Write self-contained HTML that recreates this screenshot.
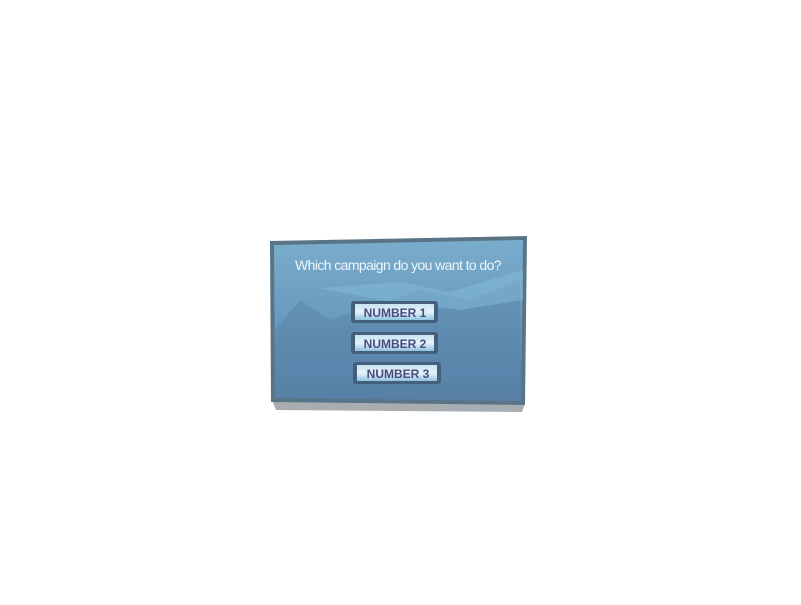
<!DOCTYPE html>
<html><head><style>body{margin:0;background:#fff;width:801px;height:600px;overflow:hidden}</style></head>
<body>
<svg width="801" height="600" viewBox="0 0 801 600" xmlns="http://www.w3.org/2000/svg">
<defs>
<linearGradient id="g" x1="0" y1="0" x2="0" y2="1">
<stop offset="0" stop-color="#7aaccc"/><stop offset="0.45" stop-color="#6a9cc0"/><stop offset="1" stop-color="#557ea6"/>
</linearGradient>
<linearGradient id="b" x1="0" y1="0" x2="0" y2="1">
<stop offset="0" stop-color="#c8e4f2"/><stop offset="0.5" stop-color="#e4f2fa"/><stop offset="1" stop-color="#8fc4e0"/>
</linearGradient>
</defs>
<polygon points="272,400 525,403 522,412 276,410" fill="#a8adb2"/>
<polygon points="270,241 527,236 525,405 271,402" fill="#5a7487"/>
<polygon points="274,245 523,240 521,401 275,398" fill="url(#g)"/>
<polygon points="275,330 300,300 330,320 420,290 470,300 520,280 521,401 275,398" fill="#5a82a8" opacity="0.5"/>
<polygon points="320,288 400,282 450,292 523,270 523,300 460,310 380,300" fill="#86bcdc" opacity="0.5"/>
<text x="398" y="270" text-anchor="middle" font-family="Liberation Sans, sans-serif" font-size="14" fill="#eef6fb" letter-spacing="-0.6">Which campaign do you want to do?</text>
<g font-family="Liberation Sans, sans-serif" font-weight="bold" font-size="12" fill="#4b4a7c" text-anchor="middle">
<rect x="351" y="301" width="87" height="22" rx="3" fill="#44607a"/><rect x="355" y="304" width="79" height="16" fill="url(#b)"/>
<text x="395" y="317">NUMBER 1</text>
<rect x="351" y="332" width="87" height="22" rx="3" fill="#44607a"/><rect x="355" y="335" width="79" height="16" fill="url(#b)"/>
<text x="395" y="348">NUMBER 2</text>
<rect x="353" y="362" width="88" height="22" rx="3" fill="#44607a"/><rect x="357" y="365" width="80" height="16" fill="url(#b)"/>
<text x="398" y="378">NUMBER 3</text>
</g>
</svg>
</body></html>
